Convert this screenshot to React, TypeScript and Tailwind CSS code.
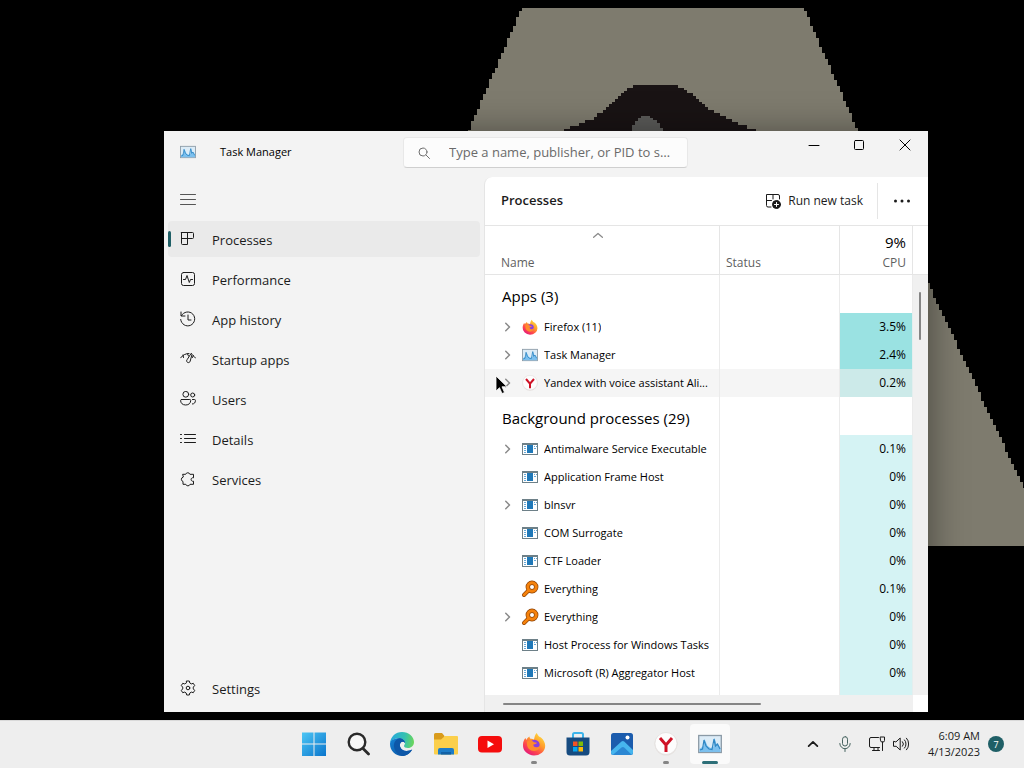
import type { ReactNode } from 'react'

type Point = [number, number]

type Process = {
  name: string
  icon: ReactNode
  cpu: string
  expandable?: boolean
  heat?: string
  hovered?: boolean
}

/** Turns a polyline into a blocky staircase, snapped to square cells. */
function stairs(points: Point[], cell = 3) {
  const out: string[] = []
  for (let i = 0; i < points.length - 1; i++) {
    const [x0, y0] = points[i]
    const [x1, y1] = points[i + 1]
    const steps = Math.max(1, Math.round(Math.abs(y1 - y0) / cell))
    for (let s = 0; s < steps; s++) {
      const x = Math.round((x0 + ((x1 - x0) * (s + 0.5)) / steps) / cell) * cell
      const top = y0 + ((y1 - y0) * s) / steps
      const bottom = y0 + ((y1 - y0) * (s + 1)) / steps
      out.push(`${x},${Math.round(top)}`, `${x},${Math.round(bottom)}`)
    }
  }
  return out.join(' ')
}

const lampEdge = stairs([[804, 8], [858, 131], [928, 283], [1024, 488], [1051, 546]])
const lampLeft = stairs([[344, 546], [469, 130], [522, 8]])
const hood = stairs([
  [560, 132], [590, 120], [605, 110], [618, 96], [634, 85],
  [676, 85], [690, 93], [710, 110], [735, 122], [760, 132],
])

function Wallpaper() {
  return (
    <svg
      className="absolute inset-0 size-full"
      viewBox="0 0 1024 768"
      preserveAspectRatio="xMidYMid slice"
      shapeRendering="crispEdges"
      aria-hidden="true"
    >
      <rect width="1024" height="768" fill="#000" />
      <polygon points={`${lampEdge} ${lampLeft}`} fill="#7e7b6e" />
      <polygon points={hood} fill="#191314" />
      <path d="M629 140v-9h3v-6h3v-4h3v-3h3v-2h9v2h3v2h4v3h3v5h3v12z" fill="#5b5b59" />
    </svg>
  )
}

function Line({ children, size = 16, width = 1 }: { children: ReactNode; size?: number; width?: number }) {
  return (
    <svg
      width={size}
      height={size}
      viewBox="0 0 16 16"
      fill="none"
      stroke="currentColor"
      strokeWidth={width}
      strokeLinecap="round"
      strokeLinejoin="round"
      className="shrink-0"
      aria-hidden="true"
    >
      {children}
    </svg>
  )
}

function GraphIcon({ size = 16 }: { size?: number }) {
  return (
    <svg width={size} height={size} viewBox="0 0 24 24" className="shrink-0" aria-hidden="true">
      <rect x="0.7" y="3.5" width="22.6" height="17" fill="#dcecf7" stroke="#8b9aa6" strokeWidth="1.3" />
      <path d="M1.500 17l4-3 1-7 3 7 3 2 3-1 1-9 2 6 2 1 2 3v4h-21z" fill="#7cc0ee" />
      <path d="M2 18l2.500-1 1.500-9 2 6 3 3 3 .5 2-10.500 1.500 7 2-2 2.500 5" fill="none" stroke="#2f87c4" strokeWidth="1.200" />
    </svg>
  )
}

function WindowIcon() {
  return (
    <svg width="16" height="16" viewBox="0 0 16 16" className="shrink-0" shapeRendering="crispEdges" aria-hidden="true">
      <rect x="0" y="2" width="16" height="12" fill="#6d8088" />
      <rect x="1" y="4" width="14" height="9" fill="#fff" />
      <rect x="5" y="4" width="6" height="8" fill="#1f78b8" />
      <path d="M2 5h2v1H2zM2 7h2v1H2zM2 9h2v1H2zM2 11h2v1H2zM12 5h1v1h-1zM14 5h1v1h-1zM12 7h2v1h-2z" fill="#69a9d6" />
    </svg>
  )
}

function FirefoxIcon({ size = 16 }: { size?: number }) {
  return (
    <svg width={size} height={size} viewBox="0 0 24 24" className="shrink-0" aria-hidden="true">
      <defs>
        <linearGradient id="fox" x1="0.85" y1="0.05" x2="0.2" y2="0.95">
          <stop offset="0" stopColor="#ffe040" />
          <stop offset="0.4" stopColor="#ff9a2b" />
          <stop offset="0.7" stopColor="#ff4a4b" />
          <stop offset="1" stopColor="#e3177c" />
        </linearGradient>
      </defs>
      <path
        d="M14.500 1c1.200 1.600 1.600 2.400 2.500 3.600 1.200.6 2 .9 2.500 1.400 2 2 3.700 4.600 3.700 7.700A11.200 9.800 0 0 1 12 23.500 11.200 10 0 0 1 1 13c0-3 1-5.600 2.500-7l.8 2C5 6.500 6 5.500 7.500 4.500c0 1 .3 1.600 1 2.200 1.300-.2 2.500 0 3.500.8.500-2.500 1-4.700 2.500-6.500z"
        fill="url(#fox)"
      />
      <circle cx="12.500" cy="13" r="5.200" fill="#8a3fe0" />
      <path d="M5 9.500c2.500-1.500 5-1 7 .7l3 .5c-.5 1.300-2 1.500-3.500 1.800-.5 1.500 1 3.200 3.500 2.800 1.500-.3 2.700-1.200 3.200-2.500.3 4-2.700 6.200-6 6.200C8 19 5 16 5 12z" fill="#ff8b2c" />
    </svg>
  )
}

function YandexIcon({ size = 16 }: { size?: number }) {
  return (
    <svg width={size} height={size} viewBox="0 0 24 24" className="shrink-0" aria-hidden="true">
      <circle cx="12" cy="12" r="11.500" fill="#e6e2e0" />
      <circle cx="12" cy="11.500" r="11" fill="#fdfdfd" stroke="#dedad8" strokeWidth="0.6" />
      <path d="M6 6l6 7 6-7M12 13v7" fill="none" stroke="#cf1226" strokeWidth="3" />
    </svg>
  )
}

function EverythingIcon() {
  return (
    <svg width="18" height="18" viewBox="0 0 18 18" className="-mx-px shrink-0" aria-hidden="true">
      <path d="M7 11l-4 4" stroke="#8d4307" strokeWidth="4" strokeLinecap="round" />
      <circle cx="11" cy="7" r="4.200" fill="#fff" stroke="#8d4307" strokeWidth="4.400" />
      <path d="M7 11l-4 4" stroke="#f5820c" strokeWidth="2.600" strokeLinecap="round" />
      <circle cx="11" cy="7" r="4.200" fill="none" stroke="#f5820c" strokeWidth="3" />
    </svg>
  )
}

const navItems = [
  {
    label: 'Processes',
    icon: <path d="M1.500 1.500h6v12h-5a1 1 0 0 1-1-1v-11zM1.500 7.500h11a1 1 0 0 0 1-1v-4a1 1 0 0 0-1-1h-5" />,
  },
  {
    label: 'Performance',
    icon: (
      <>
        <rect x="1.500" y="1.500" width="13" height="13" rx="2" />
        <path d="M3.500 8.500h2l1.500-4 2.300 7 1.200-3h2" />
      </>
    ),
  },
  {
    label: 'App history',
    icon: <path d="M1 1v4h4M1.500 4.600A7 7 0 1 1 .7 8.500M8 4v5h3" />,
  },
  {
    label: 'Startup apps',
    icon: <path d="M.7 6.800A10 10 0 0 1 9 2.500M3 4l.5 2.500M13 4.500a10 10 0 0 1 2.500 2.500M12.500 6.500l.8-2M11 2.600L7.300 8.400a1.800 1.800 0 1 0 2.900 1.700L12 3.400zM7.500 3l1 2" />,
  },
  {
    label: 'Users',
    icon: (
      <>
        <circle cx="5.800" cy="3.300" r="2.900" />
        <circle cx="12.700" cy="4" r="2" />
        <path d="M1.500 8.500h8.300a.9.900 0 0 1 .9.900c0 2.700-1.800 4.600-5 4.600S.6 12.100.6 9.400a.9.900 0 0 1 .9-.9zM12.500 8.500h2a.9.900 0 0 1 .9.900c0 2.200-1 3.600-3 3.600" />
      </>
    ),
  },
  {
    label: 'Details',
    icon: <path d="M4.500 3.500h11M4.500 7.500h11M4.500 11.500h11M.5 3.500h1M.5 7.500h1M.5 11.500h1" />,
  },
  {
    label: 'Services',
    icon: <path d="M3 3.300h2.700a2.200 2.200 0 0 1 4.200 0h3.600v3.500a1.800 1.800 0 1 0 0 3.400v3.100H10a2.200 2.200 0 0 1-4.200 0H3v-2.800a2.300 2.300 0 0 1 0-4.400z" />,
  },
]

const hot = 'bg-[#9ae2e2]'
const groups: { title: string; rows: Process[] }[] = [
  {
    title: 'Apps (3)',
    rows: [
      { name: 'Firefox (11)', icon: <FirefoxIcon />, cpu: '3.5%', expandable: true, heat: hot },
      { name: 'Task Manager', icon: <GraphIcon />, cpu: '2.4%', expandable: true, heat: hot },
      {
        name: 'Yandex with voice assistant Ali...',
        icon: <YandexIcon />,
        cpu: '0.2%',
        expandable: true,
        heat: 'bg-[#cceae9]',
        hovered: true,
      },
    ],
  },
  {
    title: 'Background processes (29)',
    rows: [
      { name: 'Antimalware Service Executable', icon: <WindowIcon />, cpu: '0.1%', expandable: true },
      { name: 'Application Frame Host', icon: <WindowIcon />, cpu: '0%' },
      { name: 'blnsvr', icon: <WindowIcon />, cpu: '0%', expandable: true },
      { name: 'COM Surrogate', icon: <WindowIcon />, cpu: '0%' },
      { name: 'CTF Loader', icon: <WindowIcon />, cpu: '0%' },
      { name: 'Everything', icon: <EverythingIcon />, cpu: '0.1%' },
      { name: 'Everything', icon: <EverythingIcon />, cpu: '0%', expandable: true },
      { name: 'Host Process for Windows Tasks', icon: <WindowIcon />, cpu: '0%' },
      { name: 'Microsoft (R) Aggregator Host', icon: <WindowIcon />, cpu: '0%' },
    ],
  },
]

function TitleBar() {
  return (
    <header className="flex h-[46px] shrink-0 items-start">
      <div className="flex h-[42px] w-[239px] items-center gap-6 pl-4">
        <GraphIcon />
        <h1 className="text-[11px] text-black">Task Manager</h1>
      </div>
      <label className="mt-1.5 flex h-[31px] min-w-0 max-w-[285px] flex-1 items-center rounded border border-[#e8e8e8] border-b-[#cfcfcf] bg-[#fcfcfc] pr-3 pl-3 text-[#6f6f6f]">
        <Line>
          <circle cx="7" cy="7" r="4" />
          <path d="M10 10l3.500 3.500" />
        </Line>
        <input
          type="text"
          aria-label="Search processes"
          placeholder="Type a name, publisher, or PID to search"
          className="ml-[17px] min-w-0 flex-1 bg-transparent text-[13px] text-ellipsis outline-none placeholder:text-[#6a6a6a]"
        />
      </label>
      <div className="ml-auto flex text-black">
        <button type="button" aria-label="Minimize" className="flex h-7 w-[45px] items-center justify-center">
          <Line><path d="M3 8.500h10" /></Line>
        </button>
        <button type="button" aria-label="Maximize" className="flex h-7 w-[46px] items-center justify-center">
          <Line><rect x="3.500" y="3.500" width="9" height="9" rx="1" /></Line>
        </button>
        <button type="button" aria-label="Close" className="flex h-7 w-[46px] items-center justify-center">
          <Line><path d="M3 3l10 10M13 3L3 13" /></Line>
        </button>
      </div>
    </header>
  )
}

function Sidebar() {
  return (
    <nav className="flex w-80 shrink-0 flex-col pr-1 pl-1 text-[13px] text-[#1b1b1b]">
      <button type="button" aria-label="Open navigation" className="flex h-11 w-10 items-center justify-center">
        <Line><path d="M.5 3.500h15M.5 8.500h15M.5 13.500h15" stroke="#555" /></Line>
      </button>
      <ul className="flex flex-col gap-1">
        {navItems.map((item, i) => (
          <li key={item.label}>
            <button
              type="button"
              aria-current={i === 0 ? 'page' : undefined}
              className={`flex h-9 w-full items-center rounded ${i === 0 ? 'bg-[#eaeaea]' : ''}`}
            >
              <span className={`h-4 w-[3px] rounded-full ${i === 0 ? 'bg-[#1f5f66]' : ''}`} />
              <span className="ml-[9px] flex items-center gap-4">
                <Line>{item.icon}</Line>
                <span className="pt-1">{item.label}</span>
              </span>
            </button>
          </li>
        ))}
      </ul>
      <button type="button" className="mt-auto mb-1 flex h-10 items-center gap-4 pl-3">
        <Line>
          <circle cx="8" cy="8" r="1.800" />
          <path d="M6.700 1h2.600l.5 2 1.500.9 2-.6 1.400 2.300L13.300 7.100v1.800l1.400 1.500-1.400 2.300-2-.6-1.500.9-.5 2H6.700l-.5-2-1.500-.9-2 .6-1.400-2.300 1.400-1.500V7.100L1.300 5.600l1.400-2.300 2 .6L6.200 3z" />
        </Line>
        <span className="pt-1">Settings</span>
      </button>
    </nav>
  )
}

function ProcessRow({ row }: { row: Process }) {
  return (
    <tr className={`h-7 ${row.hovered ? 'bg-[#f5f5f5]' : ''}`}>
      <td className="border-r border-[#ebebeb] p-0 pl-4">
        <div className="flex items-center">
          {row.expandable ? (
            <button type="button" aria-label={`Expand ${row.name}`} className="flex h-7 w-[21px] shrink-0 items-center pl-px text-[#8a8a8a]">
              <Line size={12} width={2}><path d="M5 3l5 5-5 5" /></Line>
            </button>
          ) : (
            <span className="w-[21px] shrink-0" />
          )}
          {row.icon}
          <span className="ml-1.5 truncate text-[11px] text-black">{row.name}</span>
        </div>
      </td>
      <td className="border-r border-[#ebebeb] p-0" />
      <td className={`border-r border-[#e4eeee] p-0 pr-1.5 text-right text-black ${row.heat ?? 'bg-[#d5f3f4]'}`}>{row.cpu}</td>
    </tr>
  )
}

function ProcessTable() {
  return (
    <div className="flex min-h-0 flex-1">
      <div className="flex min-w-0 flex-1 flex-col">
        <div className="min-h-0 flex-1 overflow-hidden">
          <table className="w-full table-fixed border-separate border-spacing-0 text-[12px]">
            <colgroup>
              <col />
              <col className="w-[120px]" />
              <col className="w-[73px]" />
            </colgroup>
            <thead>
              <tr className="h-[49px] text-[#5f5f5f]">
                <th scope="col" aria-sort="ascending" className="border-r border-b border-[#e5e5e5] p-0 px-4 text-left align-top font-normal">
                  <div className="flex h-5 items-center justify-center pr-2">
                    <Line size={10} width={2}><path d="M1 10l7-6 7 6" stroke="#8a8a8a" /></Line>
                  </div>
                  <div className="mt-[9px] leading-4">Name</div>
                </th>
                <th scope="col" className="border-r border-b border-[#e5e5e5] p-0 px-1.5 text-left align-top font-normal">
                  <div className="mt-[29px] leading-4">Status</div>
                </th>
                <th scope="col" className="border-r border-b border-[#e5e5e5] p-0 pr-1.5 text-right align-top font-normal">
                  <div className="mt-2 text-[15px] leading-4 text-black">9%</div>
                  <div className="mt-[5px] leading-4">CPU</div>
                </th>
              </tr>
            </thead>
            {groups.map((group) => (
              <tbody key={group.title}>
                <tr className="h-[38px]">
                  <th scope="rowgroup" className="border-r border-[#ebebeb] p-0 pt-1 pl-[17px] text-left text-[15px] leading-5 font-normal whitespace-nowrap text-black">
                    {group.title}
                  </th>
                  <td className="border-r border-[#ebebeb] p-0" />
                  <td className="border-r border-[#ebebeb] p-0" />
                </tr>
                {group.rows.map((row, i) => (
                  <ProcessRow key={i} row={row} />
                ))}
              </tbody>
            ))}
            <tbody aria-hidden="true">
              <tr className="h-7">
                <td className="border-r border-[#ebebeb] p-0" />
                <td className="border-r border-[#ebebeb] p-0" />
                <td className="border-r border-[#e4eeee] bg-[#d5f3f4] p-0" />
              </tr>
            </tbody>
          </table>
        </div>
        <div className="flex h-[17px] shrink-0 items-center bg-[#f0f0f0] pl-[18px]">
          <div className="h-0.5 w-[63%] rounded-full bg-[#858585]" />
        </div>
      </div>
      <div className="flex w-[15px] shrink-0 flex-col">
        <div className="h-[49px] border-b border-[#e5e5e5]" />
        <div className="flex-1 bg-[#f0f0f0] pt-[17px] pl-1.5">
          <div className="h-12 w-0.5 rounded-full bg-[#858585]" />
        </div>
        <div className="h-[17px]" />
      </div>
    </div>
  )
}

function TaskManager() {
  return (
    <section className="relative flex min-w-0 flex-1 flex-col bg-[#f3f3f3] shadow-[0_4px_36px_rgba(0,0,0,0.45)]">
      <TitleBar />
      <div className="flex min-h-0 flex-1">
        <Sidebar />
        <main className="flex min-w-0 flex-1 flex-col overflow-hidden rounded-tl-lg border-l border-[#e5e5e5] bg-white">
          <div className="flex h-[49px] shrink-0 items-center border-b border-[#e5e5e5] pl-4">
            <h2 className="text-[13px] font-semibold text-[#1b1b1b]">Processes</h2>
            <button type="button" className="ml-auto flex items-center gap-[7px] pr-[14px] text-[12px] text-[#1b1b1b]">
              <Line>
                <path d="M6 14H3a1.500 1.500 0 0 1-1.500-1.500V1.500H13a1.500 1.500 0 0 1 1.500 1.500v3M8 1.500v4.500M1.500 7.500h5" />
                <circle cx="11.500" cy="11.500" r="4" fill="currentColor" />
                <path d="M9.500 11.500h4M11.500 9.500v4" stroke="#fff" />
              </Line>
              Run new task
            </button>
            <div className="h-9 w-px bg-[#e5e5e5]" />
            <button type="button" aria-label="More options" className="flex h-9 w-[50px] items-center justify-center pr-0.5">
              <svg width="18" height="4" viewBox="0 0 18 4" fill="#1b1b1b" aria-hidden="true">
                <circle cx="2.500" cy="2" r="1.500" />
                <circle cx="9" cy="2" r="1.500" />
                <circle cx="15.500" cy="2" r="1.500" />
              </svg>
            </button>
          </div>
          <ProcessTable />
        </main>
      </div>
    </section>
  )
}

const apps: { label: string; icon: ReactNode; state?: 'running' | 'active' }[] = [
  {
    label: 'Start',
    icon: (
      <svg width="24" height="24" viewBox="0 0 24 24" aria-hidden="true">
        <defs>
          <linearGradient id="start" x1="0" y1="0" x2="1" y2="1">
            <stop offset="0" stopColor="#4cc6f5" />
            <stop offset="1" stopColor="#0a75cc" />
          </linearGradient>
        </defs>
        <path d="M0 .5h11.500v11H0zM12.500.5H24v11H12.500zM0 12.500h11.500V24H0zM12.500 12.500H24V24H12.500z" fill="url(#start)" />
      </svg>
    ),
  },
  {
    label: 'Search',
    icon: (
      <svg width="24" height="24" viewBox="0 0 24 24" fill="none" stroke="#2a2a2a" strokeWidth="2.400" strokeLinecap="round" aria-hidden="true">
        <circle cx="11" cy="10" r="8.300" fill="#f7f7f7" />
        <path d="M17 16.500l5.500 5.500" strokeWidth="2.800" />
      </svg>
    ),
  },
  {
    label: 'Microsoft Edge',
    icon: (
      <svg width="24" height="24" viewBox="0 0 24 24" aria-hidden="true">
        <defs>
          <linearGradient id="edge-top" x1="0" y1="0.4" x2="1" y2="0.5">
            <stop offset="0" stopColor="#27a7dd" />
            <stop offset="0.6" stopColor="#35c1b1" />
            <stop offset="1" stopColor="#6bd65a" />
          </linearGradient>
          <linearGradient id="edge-low" x1="0" y1="0" x2="1" y2="1">
            <stop offset="0" stopColor="#1583d5" />
            <stop offset="1" stopColor="#0a4d9b" />
          </linearGradient>
        </defs>
        <path d="M0 11C.8 4.500 5.500 0 12 0c6.800 0 12 4.600 12 10 0 3.500-2.600 6-6 6-2.500 0-4-.9-4-2 0-.8 1-1.300 1-3 0-2.600-2.500-4.700-6-4.700C5 6.300 1.500 8.300 0 11z" fill="url(#edge-top)" />
        <path d="M0 12c0-3.500 4-5.700 9-5.700 3.500 0 6 2.100 6 4.700-1-1.500-3-1.700-4-.7-2.800 2.700-.4 8.700 5.500 8.700 2.300 0 4.500-.8 5.700-1.500C20 21.500 16.500 24 12 24 5.500 24 0 18.800 0 12z" fill="url(#edge-low)" />
        <path d="M9 6.300c-4 1.500-5.500 5-5 8.500.7 4.600 4 8.500 9 9.100 3.800-.4 7.200-2.700 9.200-6.400-1.200.7-3.400 1.500-5.700 1.500-5.900 0-8.300-6-5.500-8.700 1-1 3-.8 4 .7 0-2.600-2.500-4.700-6-4.700z" fill="#0d57a8" />
      </svg>
    ),
  },
  {
    label: 'File Explorer',
    icon: (
      <svg width="26" height="24" viewBox="0 0 26 24" aria-hidden="true">
        <path d="M1 2.500A1.500 1.500 0 0 1 2.500 1H9l2.500 3v5H1z" fill="#d99b1c" />
        <path d="M1 7.500h7L12 4h12a1 1 0 0 1 1 1v16.500a1 1 0 0 1-1 1H2a1 1 0 0 1-1-1z" fill="#fbcf4b" />
        <path d="M5 22.500V18a2 2 0 0 1 2-2h12a2 2 0 0 1 2 2v4.500z" fill="#1c7cc8" />
        <path d="M8 20h10v2.500H8z" fill="#1160a5" />
      </svg>
    ),
  },
  {
    label: 'YouTube',
    icon: (
      <svg width="24" height="24" viewBox="0 0 24 24" aria-hidden="true">
        <rect y="4" width="24" height="16.500" rx="4" fill="#f50d0d" />
        <path d="M9.500 8.500l6.500 3.700-6.500 3.700z" fill="#fff" />
      </svg>
    ),
  },
  { label: 'Firefox', icon: <FirefoxIcon size={24} />, state: 'running' },
  {
    label: 'Microsoft Store',
    icon: (
      <svg width="24" height="24" viewBox="0 0 24 24" aria-hidden="true">
        <path d="M7 6V2.500A1.500 1.500 0 0 1 8.500 1h7A1.500 1.500 0 0 1 17 2.500V6" fill="none" stroke="#3db4ea" strokeWidth="2" />
        <path d="M.5 5.500h23V20a3.500 3.500 0 0 1-3.500 3.500H4A3.500 3.500 0 0 1 .5 20z" fill="#164b80" />
        <path d="M7 9.500h4.500V14H7z" fill="#f35325" />
        <path d="M12.500 9.500H17V14h-4.500z" fill="#81bc06" />
        <path d="M7 15h4.500v4.500H7z" fill="#05a6f0" />
        <path d="M12.500 15H17v4.500h-4.500z" fill="#ffba08" />
      </svg>
    ),
  },
  {
    label: 'Photos',
    icon: (
      <svg width="24" height="24" viewBox="0 0 24 24" aria-hidden="true">
        <rect x="1" y="1" width="22" height="22" rx="2.500" fill="#1b5cad" />
        <path d="M1 19L11.500 9.500a2 2 0 0 1 2.700 0L23 18v2.500a2.500 2.500 0 0 1-2.500 2.500h-17A2.500 2.500 0 0 1 1 20.500z" fill="#46b5ee" />
        <path d="M3 22.800l8.500-7.300a2 2 0 0 1 2.700 0l7.500 7.200-1.200.3h-17z" fill="#2b87d3" />
        <circle cx="17.500" cy="5.500" r="2" fill="#fff" />
      </svg>
    ),
  },
  { label: 'Yandex', icon: <YandexIcon size={24} />, state: 'running' },
  { label: 'Task Manager', icon: <GraphIcon size={24} />, state: 'active' },
]

function Taskbar() {
  return (
    <footer className="relative grid h-12 shrink-0 grid-cols-[1fr_auto_1fr] items-center border-t border-[#d9d9d9] bg-[#eeeeee]">
      <div />
      <div className="flex h-full pb-px">
        {apps.map((app) => (
          <button key={app.label} type="button" aria-label={app.label} className="flex w-11 items-center justify-center">
            <span className={`relative flex size-10 items-center justify-center rounded ${app.state === 'active' ? 'bg-[#fafafa]' : ''}`}>
              {app.icon}
              {app.state === 'running' && <span className="absolute bottom-0 h-[3px] w-1.5 rounded-full bg-[#858585]" />}
              {app.state === 'active' && <span className="absolute bottom-0 h-[3px] w-4 rounded-full bg-[#2d6f78]" />}
            </span>
          </button>
        ))}
      </div>
      <div className="flex h-full items-center justify-end pr-5 pb-px text-[#1b1b1b]">
        <button type="button" aria-label="Show hidden icons" className="flex h-10 w-8 items-center justify-center">
          <Line size={14} width={2}><path d="M3 10.500L8 5.500l5 5" /></Line>
        </button>
        <button type="button" aria-label="Microphone" className="flex h-10 w-8 items-center justify-center text-[#45635f]">
          <Line>
            <rect x="5.500" y=".7" width="5" height="9.300" rx="2.500" />
            <path d="M2.800 7.500a5.200 5.200 0 0 0 10.400 0M8 12.800v2.700" />
          </Line>
        </button>
        <button type="button" aria-label="Network and volume" className="flex h-10 items-center gap-2 px-2">
          <Line>
            <path d="M9.500 1.500H2A1.500 1.500 0 0 0 .5 3v7A1.500 1.500 0 0 0 2 11.500h8.500M5 11.500v3M9 11.500v3M3.500 14.500h7M11.500 1h4v3.500a1.500 1.500 0 0 1-1.500 1.500h-1a1.500 1.500 0 0 1-1.500-1.500zM13.500 6v8.500" />
          </Line>
          <Line>
            <path d="M.5 5.700v4.600h2.700l4 3.700V2L3.200 5.700zM9.500 5.700a3.400 3.400 0 0 1 0 4.600M11.500 3.900a6 6 0 0 1 0 8.200M13.500 2.200a8.500 8.500 0 0 1 0 11.600" />
          </Line>
        </button>
        <button type="button" className="ml-[11px] text-right text-[11px] leading-4 whitespace-nowrap">
          6:09 AM
          <br />
          4/13/2023
        </button>
        <span className="ml-2 flex size-4 shrink-0 items-center justify-center rounded-full bg-[#1f5f66] text-[9px] leading-none text-white">7</span>
      </div>
    </footer>
  )
}

export default function App() {
  return (
    <div className="relative flex h-screen min-h-[600px] flex-col overflow-hidden bg-black font-['Open_Sans','Noto_Sans',sans-serif]">
      <Wallpaper />
      <div className="relative flex min-h-0 flex-1 pt-[131px] pr-24 pb-2 pl-[164px]">
        <TaskManager />
        <svg className="absolute top-[375px] left-[495px]" width="13" height="20" viewBox="0 0 13 20" aria-hidden="true">
          <path d="M1 1v15l3.500-3.300L7 18.500l2.500-1-2.500-5.700h5z" fill="#000" stroke="#fff" strokeWidth="0.800" />
        </svg>
      </div>
      <Taskbar />
    </div>
  )
}
